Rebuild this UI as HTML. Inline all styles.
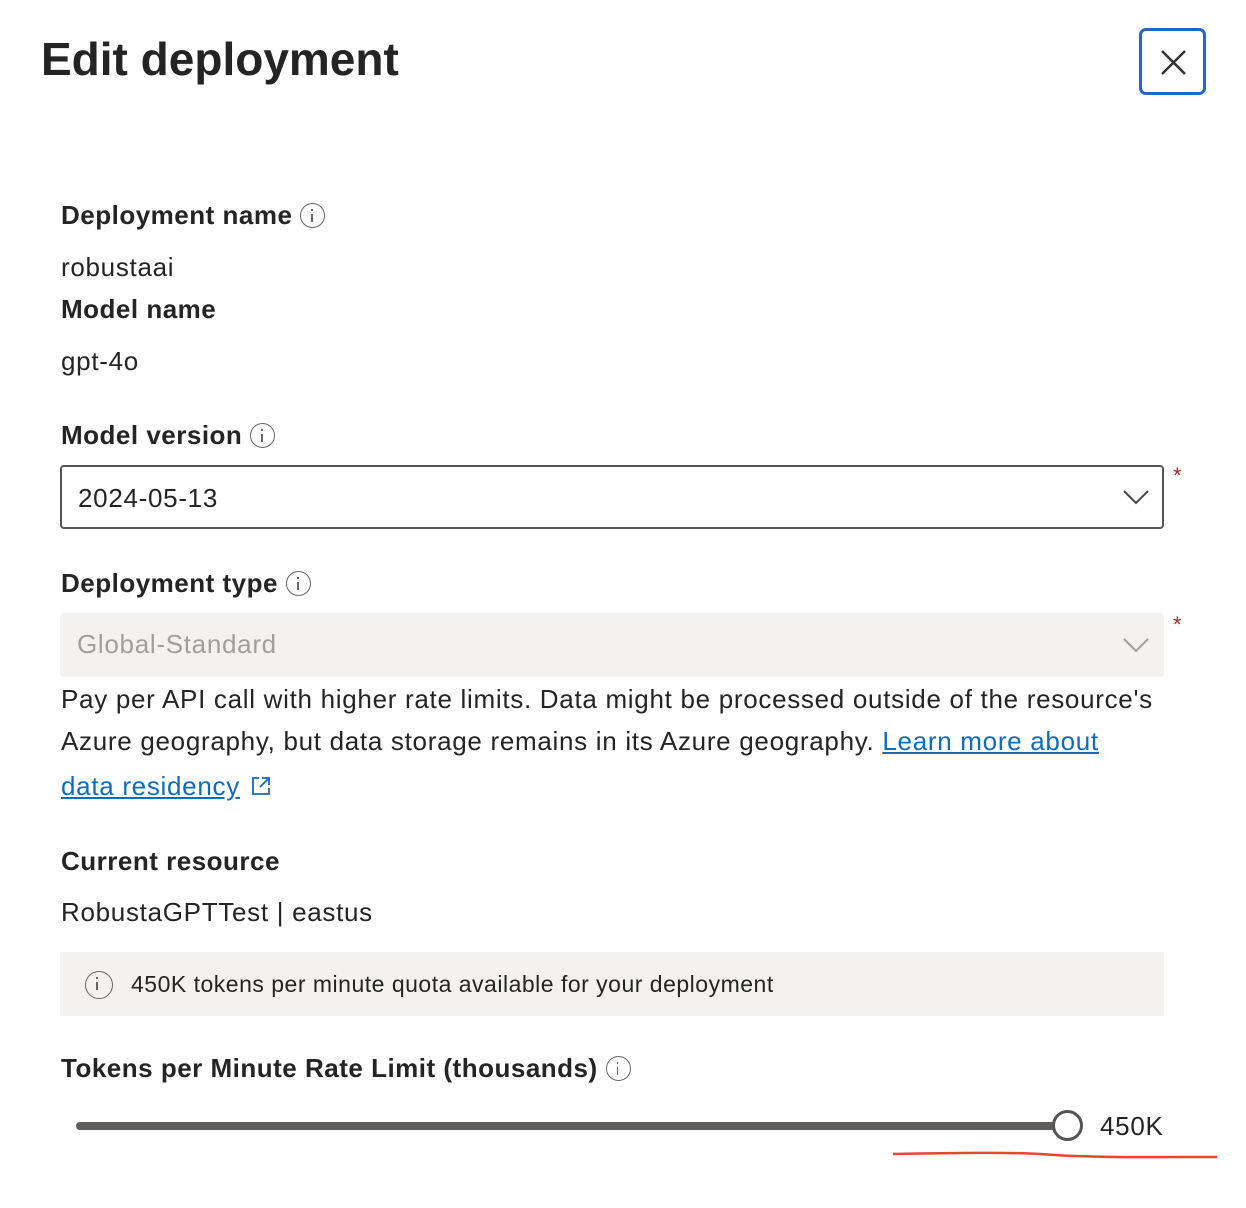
<!DOCTYPE html>
<html><head><meta charset="utf-8"><style>
body{margin:0;width:1246px;height:1208px;background:#fff;position:relative;overflow:hidden;font-family:"Liberation Sans",sans-serif;color:#242424}
.a{position:absolute;white-space:nowrap}
.lbl{font-size:26px;font-weight:bold;color:#242424;letter-spacing:0.5px}
.txt{font-size:26px;color:#242424;letter-spacing:0.7px}
.info{display:inline-block;width:25px;height:25px;border:1.5px solid #666;border-radius:50%;box-sizing:border-box;position:relative;vertical-align:middle;margin-left:8px;top:-2px}
.info:before{content:"";position:absolute;left:10px;top:10px;width:1.5px;height:8px;background:#666}
.info:after{content:"";position:absolute;left:10px;top:5px;width:1.5px;height:2px;background:#666}
.star{color:#a4262c;font-size:22px}
</style></head><body>
<div class="a" style="left:41px;top:32px;font-size:46px;font-weight:bold">Edit deployment</div>
<div class="a" style="left:1139px;top:28px;border:3px solid #2266c9;border-radius:7px;box-sizing:border-box;width:67px;height:67px">
<svg width="61" height="61" viewBox="0 0 61 61" style="position:absolute;left:0;top:0"><path d="M20 20L43 43M43 20L20 43" stroke="#333" stroke-width="2.5"/></svg></div>

<div class="a lbl" style="left:61px;top:200px">Deployment name<span class="info"></span></div>
<div class="a txt" style="left:61px;top:252px">robustaai</div>
<div class="a lbl" style="left:61px;top:294px">Model name</div>
<div class="a txt" style="left:61px;top:346px">gpt-4o</div>
<div class="a lbl" style="left:61px;top:420px">Model version<span class="info"></span></div>
<div class="a" style="left:60px;top:465px;width:1104px;height:64px;border:2px solid #555;border-radius:4px;box-sizing:border-box"></div>
<div class="a txt" style="left:78px;top:483px">2024-05-13</div>
<svg class="a" style="left:1122px;top:488px" width="28" height="18"><path d="M2 3L14 15L26 3" fill="none" stroke="#444" stroke-width="2"/></svg>
<div class="a star" style="left:1173px;top:463px">*</div>

<div class="a lbl" style="left:61px;top:568px">Deployment type<span class="info"></span></div>
<div class="a" style="left:60px;top:613px;width:1104px;height:64px;background:#f3f2f1;border-radius:4px"></div>
<div class="a txt" style="left:77px;top:629px;color:#a19f9d">Global-Standard</div>
<svg class="a" style="left:1122px;top:636px" width="28" height="18"><path d="M2 3L14 15L26 3" fill="none" stroke="#a19f9d" stroke-width="2"/></svg>
<div class="a star" style="left:1173px;top:612px">*</div>
<div class="a txt" style="left:61px;top:684px">Pay per API call with higher rate limits. Data might be processed outside of the resource's</div>
<div class="a txt" style="left:61px;top:726px">Azure geography, but data storage remains in its Azure geography. <span style="color:#0f6cbd;text-decoration:underline">Learn more about</span></div>
<div class="a txt" style="left:61px;top:771px;color:#0f6cbd"><span style="text-decoration:underline">data residency</span>
<svg width="22" height="22" style="vertical-align:-2px;margin-left:2px"><path d="M9 3H3V19H19V13M12 3H19V10M19 3L10 12" fill="none" stroke="#0f6cbd" stroke-width="1.8"/></svg></div>

<div class="a lbl" style="left:61px;top:846px">Current resource</div>
<div class="a txt" style="left:61px;top:897px">RobustaGPTTest | eastus</div>
<div class="a" style="left:60px;top:952px;width:1104px;height:64px;background:#f3f2f1"></div>
<div class="a" style="left:85px;top:971px;font-size:23px;letter-spacing:0.5px"><span class="info" style="width:28px;height:28px;margin:0;top:-1px"></span><span style="margin-left:18px">450K tokens per minute quota available for your deployment</span></div>

<div class="a lbl" style="left:61px;top:1053px">Tokens per Minute Rate Limit (thousands)<span class="info"></span></div>
<div class="a" style="left:76px;top:1122px;width:984px;height:8px;background:#605e5c;border-radius:4px"></div>
<div class="a" style="left:1052px;top:1110px;width:31px;height:31px;border:3px solid #555;border-radius:50%;background:#fff;box-sizing:border-box"></div>
<div class="a txt" style="left:1100px;top:1111px">450K</div>
<svg class="a" style="left:890px;top:1148px" width="330" height="16"><path d="M3 6C60 5 120 4 150 6C200 10 260 9 327 9" fill="none" stroke="#e8472c" stroke-width="2.5"/></svg>
</body></html>
